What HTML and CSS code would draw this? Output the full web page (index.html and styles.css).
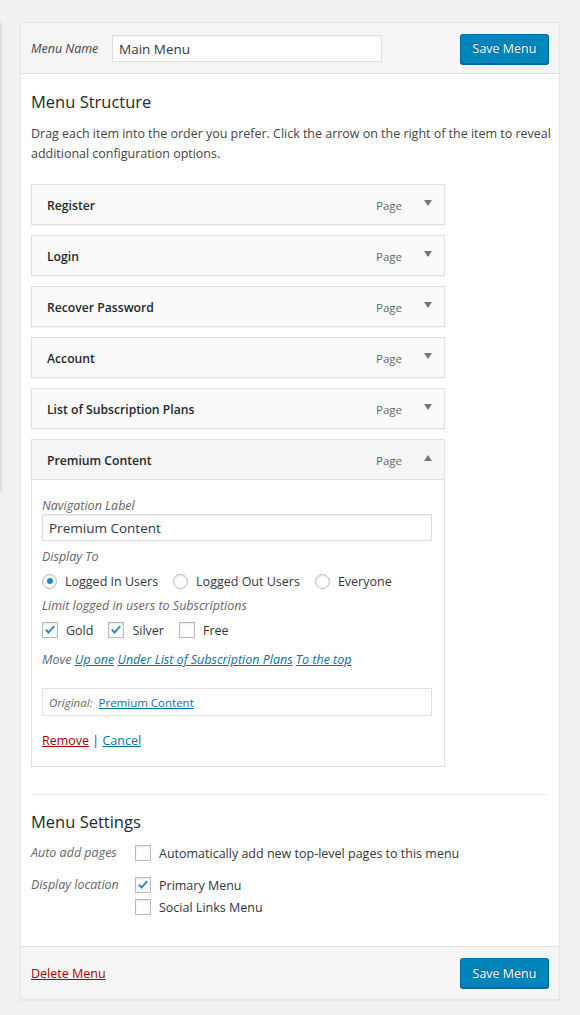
FILE: index.html
```html
<!DOCTYPE html>
<html>
<head>
<meta charset="utf-8">
<link rel="stylesheet" href="styles.css">
</head>
<body>
<div class="side-edge"></div>
<div class="panel">
  <div class="panel-header">
    <label class="menu-name-label">Menu Name</label>
    <input class="text-input menu-name-input" type="text" value="Main Menu">
    <button class="btn-primary">Save Menu</button>
  </div>
  <div class="panel-body">
    <h3 class="section-title">Menu Structure</h3>
    <p class="desc">Drag each item into the order you prefer. Click the arrow on the right of the item to reveal additional configuration options.</p>
    <ul class="menu-list">
      <li class="menu-item"><div class="item-bar"><span class="item-title">Register</span><span class="item-type">Page</span><span class="arrow down"></span></div></li>
      <li class="menu-item"><div class="item-bar"><span class="item-title">Login</span><span class="item-type">Page</span><span class="arrow down"></span></div></li>
      <li class="menu-item"><div class="item-bar"><span class="item-title">Recover Password</span><span class="item-type">Page</span><span class="arrow down"></span></div></li>
      <li class="menu-item"><div class="item-bar"><span class="item-title">Account</span><span class="item-type">Page</span><span class="arrow down"></span></div></li>
      <li class="menu-item"><div class="item-bar"><span class="item-title">List of Subscription Plans</span><span class="item-type">Page</span><span class="arrow down"></span></div></li>
      <li class="menu-item open">
        <div class="item-bar"><span class="item-title">Premium Content</span><span class="item-type">Page</span><span class="arrow up"></span></div>
        <div class="item-settings">
          <div class="field-label">Navigation Label</div>
          <input class="text-input nav-input" type="text" value="Premium Content">
          <div class="field-label gap-top">Display To</div>
          <div class="choice-row">
            <span class="choice"><span class="radio checked"></span>Logged In Users</span>
            <span class="choice"><span class="radio"></span>Logged Out Users</span>
            <span class="choice"><span class="radio"></span>Everyone</span>
          </div>
          <div class="field-label">Limit logged in users to Subscriptions</div>
          <div class="choice-row">
            <span class="choice"><span class="checkbox checked"><svg viewBox="0 0 16 16"><path d="M3.2 7.6 L6.3 11 L12.8 3.6" /></svg></span>Gold</span>
            <span class="choice"><span class="checkbox checked"><svg viewBox="0 0 16 16"><path d="M3.2 7.6 L6.3 11 L12.8 3.6" /></svg></span>Silver</span>
            <span class="choice"><span class="checkbox"></span>Free</span>
          </div>
          <div class="move-row">Move <a href="#">Up one</a> <a href="#">Under List of Subscription Plans</a> <a href="#">To the top</a></div>
          <div class="original-box"><span class="orig-label">Original:</span> <a href="#">Premium Content</a></div>
          <div class="actions"><a href="#" class="danger">Remove</a> <span class="sep">|</span> <a href="#">Cancel</a></div>
        </div>
      </li>
    </ul>
    <div class="divider"></div>
    <h3 class="section-title settings-title">Menu Settings</h3>
    <div class="settings-grid">
      <div class="set-label">Auto add pages</div>
      <div class="set-values">
        <span class="choice"><span class="checkbox"></span>Automatically add new top-level pages to this menu</span>
      </div>
      <div class="set-label">Display location</div>
      <div class="set-values stack">
        <span class="choice"><span class="checkbox checked"><svg viewBox="0 0 16 16"><path d="M3.2 7.6 L6.3 11 L12.8 3.6" /></svg></span>Primary Menu</span>
        <span class="choice"><span class="checkbox"></span>Social Links Menu</span>
      </div>
    </div>
  </div>
  <div class="panel-footer">
    <a href="#" class="danger">Delete Menu</a>
    <button class="btn-primary">Save Menu</button>
  </div>
</div>
</body>
</html>
```
FILE: styles.css
```css
* { box-sizing: border-box; }
html, body { margin: 0; padding: 0; }
body {
  background: #f1f1f1;
  font-family: "Open Sans", "Noto Sans", sans-serif;
  font-size: 12.5px;
  color: #444;
  padding: 22px 20px 16px 20px;
  position: relative;
  width: 580px;
}
.side-edge {
  position: absolute;
  left: 0;
  top: 22px;
  width: 2px;
  height: 470px;
  background: #e2e2e2;
}
.panel {
  background: #fff;
  border: 1px solid #e5e5e5;
  box-shadow: 0 1px 1px rgba(0,0,0,0.04);
}
.panel-header {
  background: #f5f5f5;
  border-bottom: 1px solid #dfdfdf;
  display: flex;
  align-items: center;
  height: 51px;
  padding: 1px 10px 0 10px;
}
.menu-name-label {
  font-style: italic;
  color: #444;
  width: 81px;
}
.text-input {
  font-family: inherit;
  font-size: 13.5px;
  color: #32373c;
  border: 1px solid #ddd;
  box-shadow: inset 0 1px 2px rgba(0,0,0,0.07);
  background: #fff;
  height: 27px;
  padding: 0 6px;
  outline: none;
}
.menu-name-input { width: 270px; }
.btn-primary {
  margin-left: auto;
  background: #0085ba;
  border: 1px solid #0073aa;
  border-color: #0073aa #006799 #006799;
  box-shadow: 0 1px 0 #006799;
  color: #fff;
  font-family: inherit;
  font-size: 12.5px;
  height: 30px;
  width: 89px;
  border-radius: 3px;
  padding: 0;
  text-shadow: 0 -1px 1px #006799, 1px 0 1px #006799;
}
.panel-body {
  padding: 16px 10px 28px 10px;
}
.section-title {
  margin: 0;
  font-size: 16.5px;
  font-weight: 500;
  color: #23282d;
  line-height: 24px;
}
.desc {
  margin: 10px -6px 20px 0;
  line-height: 20px;
  color: #444;
  letter-spacing: -0.02px;
}
.menu-list {
  list-style: none;
  margin: 0;
  padding: 0;
  width: 414px;
  display: flex;
  flex-direction: column;
  gap: 10px;
}
.item-bar {
  height: 41px;
  background: #fafafa;
  border: 1px solid #dfdfdf;
  display: flex;
  align-items: center;
  padding: 1px 12px 0 15px;
  box-shadow: 0 1px 1px rgba(0,0,0,0.04);
}
.open .item-bar { background: #f5f5f5; border-bottom: 1px solid #dfdfdf; }
.item-title {
  font-weight: 600;
  font-size: 12.2px;
  color: #23282d;
  flex: 1;
}
.item-type {
  color: #666;
  font-size: 11.5px;
  margin-right: 22px;
  position: relative;
  top: 0px;
}
.arrow {
  width: 0;
  height: 0;
  border-left: 4px solid transparent;
  border-right: 4px solid transparent;
}
.arrow.down { border-top: 6px solid #72777c; margin-top: -4px; }
.arrow.up { border-bottom: 6px solid #72777c; margin-top: -5px; }
.item-settings {
  border: 1px solid #dfdfdf;
  border-top: none;
  padding: 17px 12px 16px 10px;
  background: #fff;
}
.field-label {
  font-style: italic;
  color: #666;
  line-height: 18px;
}
.gap-top { margin-top: 7px; }
.nav-input {
  width: 390px;
  margin-top: -1px;
  display: block;
}
.choice-row {
  display: flex;
  gap: 15px;
  margin: 4px 0 5px 0;
  height: 22px;
  align-items: center;
}
.choice {
  display: inline-flex;
  align-items: center;
  color: #32373c;
}
.radio {
  width: 15px;
  height: 15px;
  border: 1px solid #b4b9be;
  border-radius: 50%;
  margin-right: 8px;
  box-shadow: inset 0 1px 2px rgba(0,0,0,0.1);
  position: relative;
  background: #fff;
}
.radio.checked::after {
  content: "";
  position: absolute;
  left: 3.5px;
  top: 3.5px;
  width: 6px;
  height: 6px;
  border-radius: 50%;
  background: #1e8cbe;
}
.checkbox {
  width: 16px;
  height: 16px;
  border: 1px solid #b4b9be;
  margin-right: 8px;
  box-shadow: inset 0 1px 2px rgba(0,0,0,0.1);
  background: #fff;
  display: inline-block;
  position: relative;
}
.checkbox svg {
  position: absolute;
  left: 0;
  top: 0;
  width: 14px;
  height: 14px;
}
.checkbox svg path {
  fill: none;
  stroke: #1e8cbe;
  stroke-width: 2.2;
}
.move-row {
  margin-top: 10px;
  line-height: 18px;
  font-style: italic;
  color: #666;
}
a { color: #0073aa; }
a.danger { color: #a00; }
.original-box {
  margin-top: 19px;
  width: 390px;
  border: 1px solid #dfdfdf;
  height: 28px;
  padding: 0 6px;
  display: flex;
  align-items: center;
  gap: 6px;
  font-size: 11.5px;
}
.orig-label { font-style: italic; color: #666; }
.actions { margin-top: 16px; line-height: 18px; }
.sep { color: #444; }
.divider {
  border-top: 1px solid #eee;
  margin-top: 27px;
  width: 517px;
}
.settings-title { margin-top: 15px; }
.settings-grid {
  display: grid;
  grid-template-columns: 104px 1fr;
  row-gap: 10px;
  margin-top: 8px;
}
.set-label {
  font-style: italic;
  color: #666;
  line-height: 22px;
}
.set-values { display: flex; flex-direction: column; gap: 0; }
.set-values .choice { height: 22px; }
.panel-footer {
  background: #f5f5f5;
  border-top: 1px solid #dfdfdf;
  height: 53px;
  display: flex;
  align-items: center;
  padding: 0 10px;
}
```
